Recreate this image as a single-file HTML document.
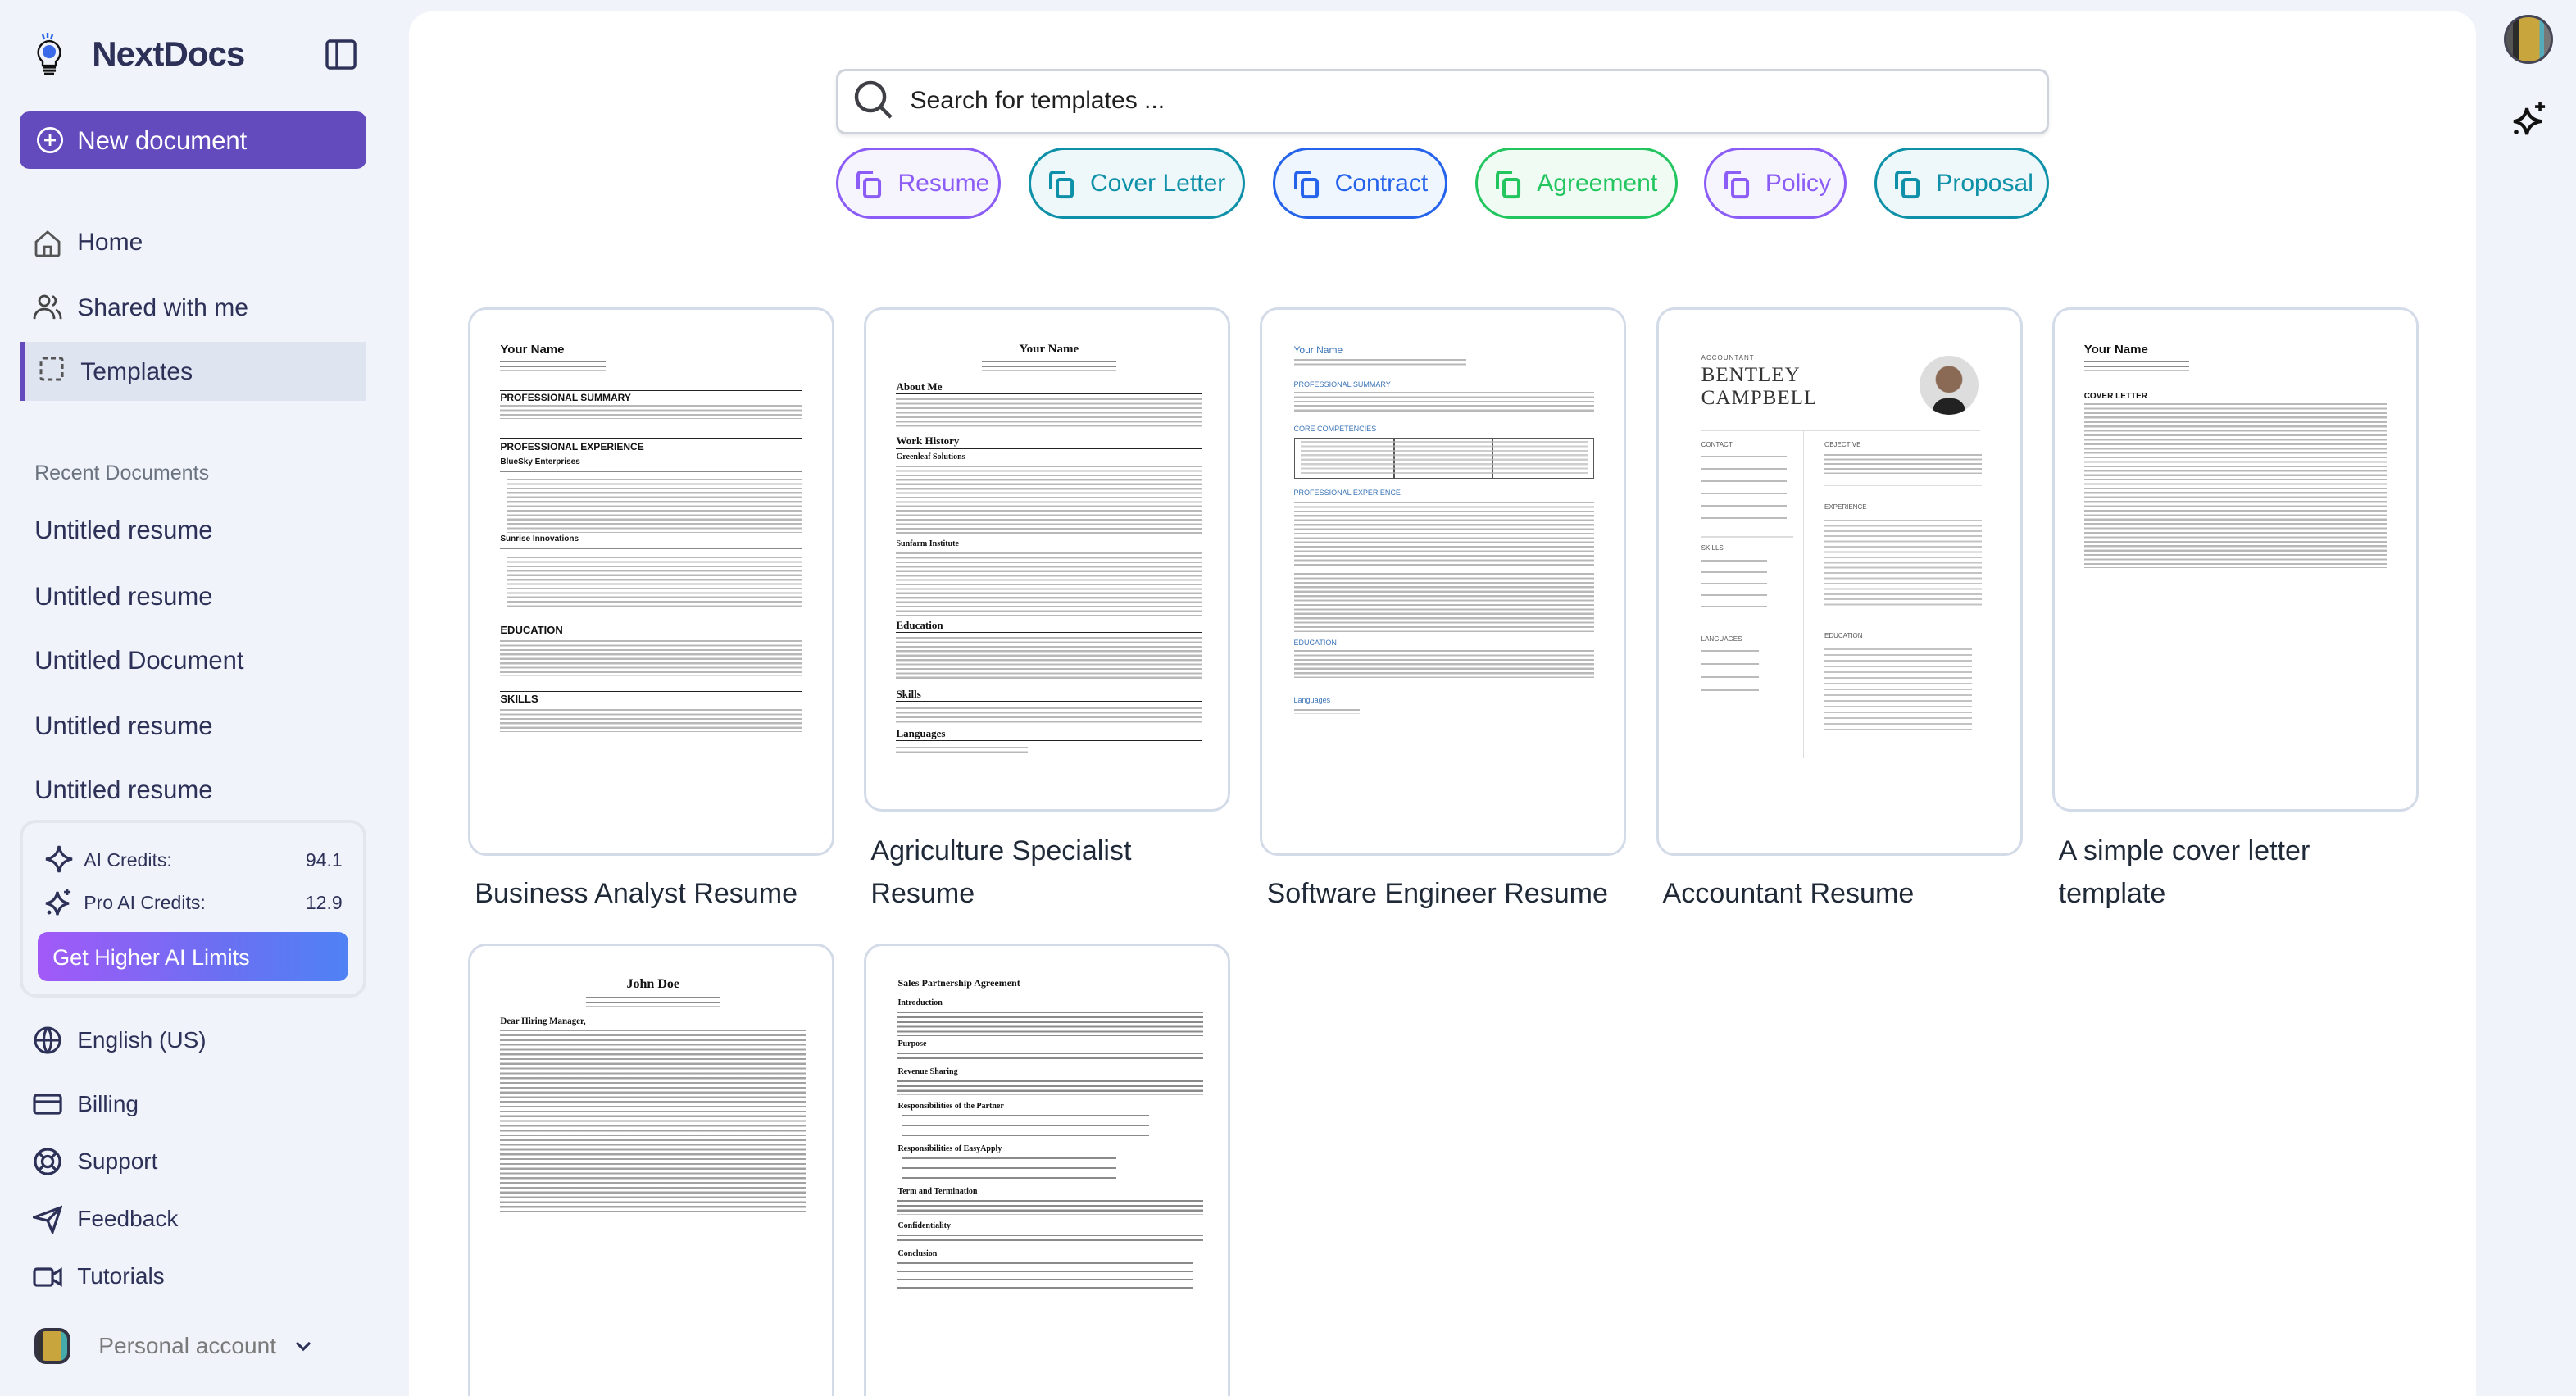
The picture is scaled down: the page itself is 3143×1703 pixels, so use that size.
<!DOCTYPE html>
<html><head><meta charset="utf-8">
<style>
*{box-sizing:border-box;margin:0;padding:0}
html,body{width:3143px;height:1703px;overflow:hidden;background:#f0f3f9}
#w{zoom:2.0045;width:1568px;height:850px;position:relative;font-family:"Liberation Sans",sans-serif;color:#2d3158;background:#f0f3f9}
.a{position:absolute}
.nav{position:absolute;left:47px;font-size:15px;color:#2d3158;white-space:nowrap;margin-top:1px}
.ic{position:absolute;left:20px}
.rec{position:absolute;left:21px;font-size:15.5px;color:#2d3158;margin-top:1px}
.main{position:absolute;left:249px;top:7px;width:1258px;height:860px;background:#fff;border-radius:14px}
.chip{position:absolute;top:90px;height:43px;border-radius:22px;border:1.5px solid;font-size:15px;display:flex;align-items:center;padding-left:36px;padding-top:1px}
.chip svg{position:absolute;left:10px;top:12px}
.card{position:absolute;width:223px;background:#fff;border:1.5px solid #d3dbe8;border-radius:11px;overflow:hidden}
.card .a{white-space:nowrap}
.p{position:absolute;background:repeating-linear-gradient(#b8b8b8 0 1.1px,transparent 1.1px 2.7px)}
.pd{position:absolute;background:repeating-linear-gradient(#8a8a8a 0 1.1px,transparent 1.1px 2.9px)}
.hr{position:absolute;height:0.7px;background:#222}
.h{position:absolute;font-weight:bold;color:#111;white-space:nowrap}
.tt{position:absolute;font-size:17px;color:#1f2937;line-height:26px;margin-top:1px}
</style></head><body><div id="w">

<svg class="a" style="left:20px;top:20px" width="20" height="27" viewBox="0 0 20 27">
<path d="M6 1l1 3M9 0v3M12 1l-1 3" stroke="#2563eb" stroke-width="1.2"/>
<path d="M10 5a7 7 0 0 0-4 12.5V20h8v-2.5A7 7 0 0 0 10 5z" fill="none" stroke="#111" stroke-width="1.2"/>
<circle cx="10" cy="11.5" r="4" fill="#3b6ae8"/>
<path d="M6 21h8M6 23h8M7 25h6" stroke="#111" stroke-width="1.5"/>
</svg>
<div class="a" style="left:56px;top:21px;font-size:21px;font-weight:bold;color:#2d3158;letter-spacing:-0.5px">NextDocs</div>
<svg class="a" style="left:198px;top:24px" width="20" height="19" viewBox="0 0 20 19"><rect x="1" y="1" width="17" height="16.5" rx="2" fill="none" stroke="#2d3158" stroke-width="1.7"/><path d="M7 1v16.5" stroke="#2d3158" stroke-width="1.7"/></svg>

<div class="a" style="left:12px;top:68px;width:211px;height:35px;background:#634bbd;border-radius:6px"></div>
<svg class="a" style="left:22px;top:77px" width="17" height="17" viewBox="0 0 17 17"><circle cx="8.5" cy="8.5" r="7.3" fill="none" stroke="#fff" stroke-width="1.4"/><path d="M8.5 5v7M5 8.5h7" stroke="#fff" stroke-width="1.4"/></svg>
<div class="nav" style="top:76px;color:#fff;font-size:15.5px">New document</div>

<svg class="ic" style="top:139px" width="18" height="18" viewBox="0 0 18 18" fill="none" stroke="#555" stroke-width="1.4"><path d="M2 8L9 2l7 6v7.5a1 1 0 0 1-1 1H3a1 1 0 0 1-1-1z"/><path d="M7 16.5V11h4v5.5"/></svg>
<div class="nav" style="top:138px">Home</div>
<svg class="ic" style="top:178px" width="18" height="18" viewBox="0 0 18 18" fill="none" stroke="#444" stroke-width="1.4"><circle cx="7" cy="5" r="3"/><path d="M1 16c0-4 3-6 6-6s6 2 6 6"/><path d="M12 2.2a3 3 0 0 1 0 5.6M14 10.5c2 .8 3 3 3 5.5"/></svg>
<div class="nav" style="top:178px">Shared with me</div>
<div class="a" style="left:12px;top:208px;width:211px;height:36px;background:#dfe4f1;border-left:3px solid #634bbd"></div>
<svg class="ic" style="top:217px;left:24px" width="16" height="16" viewBox="0 0 16 16" fill="none" stroke="#555" stroke-width="1.5" stroke-dasharray="3 2"><rect x="1" y="1" width="13" height="13" rx="1"/></svg>
<div class="nav" style="top:217px;left:49px">Templates</div>

<div class="a" style="left:21px;top:281px;font-size:12.5px;color:#6b7280">Recent Documents</div>
<div class="rec" style="top:313px">Untitled resume</div>
<div class="rec" style="top:353px">Untitled resume</div>
<div class="rec" style="top:392px">Untitled Document</div>
<div class="rec" style="top:432px">Untitled resume</div>
<div class="rec" style="top:471px">Untitled resume</div>

<div class="a" style="left:12px;top:499px;width:211px;height:108px;border:2px solid #e3e6ed;border-radius:10px"></div>
<svg class="a" style="left:27px;top:514px" width="18" height="18" viewBox="0 0 18 18"><path d="M9 1Q10 8 17 9Q10 10 9 17Q8 10 1 9Q8 8 9 1z" fill="none" stroke="#2d3158" stroke-width="1.6"/></svg>
<div class="a" style="left:51px;top:517px;font-size:11.5px;color:#2d3158">AI Credits:</div>
<div class="a" style="left:186px;top:517px;font-size:11.5px;color:#2d3158">94.1</div>
<svg class="a" style="left:27px;top:540px" width="18" height="18" viewBox="0 0 18 18"><path d="M8 3Q9 9 15 10Q9 11 8 17Q7 11 1 10Q7 9 8 3z" fill="none" stroke="#2d3158" stroke-width="1.6"/><path d="M14 1v4M12 3h4" stroke="#2d3158" stroke-width="1.3"/><circle cx="3" cy="15.5" r="1.2" fill="#2d3158"/></svg>
<div class="a" style="left:51px;top:543px;font-size:11.5px;color:#2d3158">Pro AI Credits:</div>
<div class="a" style="left:186px;top:543px;font-size:11.5px;color:#2d3158">12.9</div>
<div class="a" style="left:23px;top:567px;width:189px;height:30px;border-radius:6px;background:linear-gradient(90deg,#a259f7,#6a70f2 60%,#4f82f4)"></div>
<div class="a" style="left:32px;top:575px;font-size:13.5px;color:#fff">Get Higher AI Limits</div>

<svg class="ic" style="top:624px" width="18" height="18" viewBox="0 0 18 18" fill="none" stroke="#2d3158" stroke-width="1.5"><circle cx="9" cy="9" r="7.5"/><path d="M1.5 9h15M9 1.5c-3 3-3 12 0 15M9 1.5c3 3 3 12 0 15"/></svg>
<div class="nav" style="top:624px;font-size:14px">English (US)</div>
<svg class="ic" style="top:665px" width="18" height="14" viewBox="0 0 18 14" fill="none" stroke="#2d3158" stroke-width="1.6"><rect x="1" y="1.5" width="16" height="11" rx="1.5"/><path d="M1 5.5h16"/></svg>
<div class="nav" style="top:663px;font-size:14px">Billing</div>
<svg class="ic" style="top:698px" width="18" height="18" viewBox="0 0 18 18" fill="none" stroke="#2d3158" stroke-width="1.6"><circle cx="9" cy="9" r="7.5"/><circle cx="9" cy="9" r="3.3"/><path d="M4 4l2.6 2.6M14 4l-2.6 2.6M4 14l2.6-2.6M14 14l-2.6-2.6"/></svg>
<div class="nav" style="top:698px;font-size:14px">Support</div>
<svg class="ic" style="top:733px" width="18" height="18" viewBox="0 0 18 18" fill="none" stroke="#2d3158" stroke-width="1.6"><path d="M1 8L17 2l-5 15-3-7z M9 10l8-8"/></svg>
<div class="nav" style="top:733px;font-size:14px">Feedback</div>
<svg class="ic" style="top:771px" width="18" height="13" viewBox="0 0 18 13" fill="none" stroke="#2d3158" stroke-width="1.6"><rect x="1" y="1.5" width="11" height="10" rx="1.5"/><path d="M12 5l5-3v9l-5-3"/></svg>
<div class="nav" style="top:768px;font-size:14px">Tutorials</div>

<div class="a" style="left:21px;top:808px;width:22px;height:22px;border-radius:7px;background:linear-gradient(90deg,#333 0 20%,#c9a53e 20% 80%,#4aa 80%);border:2px solid #334"></div>
<div class="a" style="left:60px;top:811px;font-size:14px;color:#7a7a7a">Personal account</div>
<svg class="a" style="left:179px;top:815px" width="11" height="8" viewBox="0 0 11 8"><path d="M1.5 2l4 4 4-4" fill="none" stroke="#2d3158" stroke-width="1.6"/></svg>

<div class="a" style="left:1524px;top:9px;width:30px;height:30px;border-radius:50%;background:linear-gradient(90deg,#555 0 15%,#2b2b2b 15% 30%,#c9a53e 30% 75%,#5ab 75% 85%,#777 85%);border:1.5px solid #445"></div>
<svg class="a" style="left:1528px;top:61px" width="23" height="23" viewBox="0 0 23 23"><path d="M10 5Q11 12 19 13Q11 14 10 21Q9 14 2 13Q9 12 10 5z" fill="none" stroke="#111" stroke-width="2"/><path d="M18 1v6M15 4h6" stroke="#111" stroke-width="1.8"/><circle cx="3.5" cy="19.5" r="1.4" fill="#111"/></svg>

<div class="main"></div>
<div class="a" style="left:509px;top:42px;width:738px;height:40px;border:1.5px solid #cfd3dc;border-radius:6px;box-shadow:0 1px 2px rgba(0,0,0,.08)"></div>
<svg class="a" style="left:519px;top:48px" width="26" height="26" viewBox="0 0 26 26" fill="none" stroke="#3f3f46" stroke-width="2.2"><circle cx="11" cy="11" r="8.5"/><path d="M17.5 17.5l6 6"/></svg>
<div class="a" style="left:554px;top:53px;font-size:15px;color:#1f1f1f">Search for templates ...</div>

<div class="chip" style="left:509px;width:100px;border-color:#8b5cf6;color:#8b5cf6;background:#f6f4fd"><svg width="18" height="18" viewBox="0 0 18 18" fill="none" stroke="#8b5cf6" stroke-width="2"><path d="M2 12V3a1.5 1.5 0 0 1 1.5-1.5H11"/><rect x="6" y="6" width="9" height="10.5" rx="1.5"/></svg>Resume</div>
<div class="chip" style="left:626px;width:132px;border-color:#0e91a8;color:#0e91a8;background:#eef8fa"><svg width="18" height="18" viewBox="0 0 18 18" fill="none" stroke="#0e91a8" stroke-width="2"><path d="M2 12V3a1.5 1.5 0 0 1 1.5-1.5H11"/><rect x="6" y="6" width="9" height="10.5" rx="1.5"/></svg>Cover Letter</div>
<div class="chip" style="left:775px;width:106px;border-color:#2563eb;color:#2563eb;background:#f0f6fd"><svg width="18" height="18" viewBox="0 0 18 18" fill="none" stroke="#2563eb" stroke-width="2"><path d="M2 12V3a1.5 1.5 0 0 1 1.5-1.5H11"/><rect x="6" y="6" width="9" height="10.5" rx="1.5"/></svg>Contract</div>
<div class="chip" style="left:898px;width:123px;border-color:#22c55e;color:#22c55e;background:#effbf3"><svg width="18" height="18" viewBox="0 0 18 18" fill="none" stroke="#22c55e" stroke-width="2"><path d="M2 12V3a1.5 1.5 0 0 1 1.5-1.5H11"/><rect x="6" y="6" width="9" height="10.5" rx="1.5"/></svg>Agreement</div>
<div class="chip" style="left:1037px;width:87px;border-color:#8b5cf6;color:#8b5cf6;background:#f6f4fd"><svg width="18" height="18" viewBox="0 0 18 18" fill="none" stroke="#8b5cf6" stroke-width="2"><path d="M2 12V3a1.5 1.5 0 0 1 1.5-1.5H11"/><rect x="6" y="6" width="9" height="10.5" rx="1.5"/></svg>Policy</div>
<div class="chip" style="left:1141px;width:106px;border-color:#0e91a8;color:#0e91a8;background:#eef8fa"><svg width="18" height="18" viewBox="0 0 18 18" fill="none" stroke="#0e91a8" stroke-width="2"><path d="M2 12V3a1.5 1.5 0 0 1 1.5-1.5H11"/><rect x="6" y="6" width="9" height="10.5" rx="1.5"/></svg>Proposal</div>

<div class="card" style="left:285px;top:187px;height:334px">
<div class="h" style="left:18px;top:20px;font-size:7.5px">Your Name</div>
<div class="pd" style="left:18px;top:31px;width:64px;height:6px"></div>
<div class="hr" style="left:18px;top:49px;width:184px"></div>
<div class="h" style="left:18px;top:50px;font-size:6px">PROFESSIONAL SUMMARY</div>
<div class="p" style="left:18px;top:58px;width:184px;height:8.5px"></div>
<div class="hr" style="left:18px;top:78px;width:184px"></div>
<div class="h" style="left:18px;top:80px;font-size:6px">PROFESSIONAL EXPERIENCE</div>
<div class="h" style="left:18px;top:90px;font-size:5px">BlueSky Enterprises</div>
<div class="pd" style="left:18px;top:98px;width:184px;height:2px"></div>
<div class="p" style="left:22px;top:103px;width:180px;height:33px"></div>
<div class="h" style="left:18px;top:137px;font-size:5px">Sunrise Innovations</div>
<div class="pd" style="left:18px;top:145px;width:184px;height:2px"></div>
<div class="p" style="left:22px;top:150px;width:180px;height:32px"></div>
<div class="hr" style="left:18px;top:189px;width:184px"></div>
<div class="h" style="left:18px;top:191px;font-size:6.5px">EDUCATION</div>
<div class="p" style="left:18px;top:201px;width:184px;height:22px"></div>
<div class="hr" style="left:18px;top:232px;width:184px"></div>
<div class="h" style="left:18px;top:233px;font-size:6.5px">SKILLS</div>
<div class="p" style="left:18px;top:243px;width:184px;height:14px"></div>
</div>
<div class="tt" style="left:289px;top:530px">Business Analyst Resume</div>

<div class="card" style="left:526px;top:187px;height:307px">
<div class="h" style="left:0;width:222px;text-align:center;top:20px;font-size:7.5px;font-family:'Liberation Serif',serif">Your Name</div>
<div class="pd" style="left:70px;top:31px;width:82px;height:6px"></div>
<div class="h" style="left:18px;top:43px;font-size:6.5px;font-family:'Liberation Serif',serif">About Me</div>
<div class="hr" style="left:18px;top:51px;width:186px"></div>
<div class="p" style="left:18px;top:54px;width:186px;height:19px"></div>
<div class="h" style="left:18px;top:76px;font-size:6.5px;font-family:'Liberation Serif',serif">Work History</div>
<div class="hr" style="left:18px;top:84px;width:186px"></div>
<div class="h" style="left:18px;top:87px;font-size:5px;font-family:'Liberation Serif',serif">Greenleaf Solutions</div>
<div class="p" style="left:18px;top:95px;width:186px;height:43px"></div>
<div class="h" style="left:18px;top:140px;font-size:5px;font-family:'Liberation Serif',serif">Sunfarm Institute</div>
<div class="p" style="left:18px;top:148px;width:186px;height:38px"></div>
<div class="h" style="left:18px;top:188px;font-size:6.5px;font-family:'Liberation Serif',serif">Education</div>
<div class="hr" style="left:18px;top:196px;width:186px"></div>
<div class="p" style="left:18px;top:199px;width:186px;height:27px"></div>
<div class="h" style="left:18px;top:230px;font-size:6.5px;font-family:'Liberation Serif',serif">Skills</div>
<div class="hr" style="left:18px;top:238px;width:186px"></div>
<div class="p" style="left:18px;top:242px;width:186px;height:11px"></div>
<div class="h" style="left:18px;top:254px;font-size:6.5px;font-family:'Liberation Serif',serif">Languages</div>
<div class="hr" style="left:18px;top:262px;width:186px"></div>
<div class="p" style="left:18px;top:266px;width:80px;height:4px"></div>
</div>
<div class="tt" style="left:530px;top:504px">Agriculture Specialist<br>Resume</div>

<div class="card" style="left:767px;top:187px;height:334px">
<div class="h" style="left:19px;top:21px;font-size:6px;color:#3b74b8;font-weight:normal">Your Name</div>
<div class="p" style="left:19px;top:30px;width:105px;height:4px"></div>
<div class="h" style="left:19px;top:43px;font-size:4.5px;color:#3b74b8;font-weight:normal">PROFESSIONAL SUMMARY</div>
<div class="p" style="left:19px;top:50px;width:183px;height:13px"></div>
<div class="h" style="left:19px;top:70px;font-size:4.5px;color:#3b74b8;font-weight:normal">CORE COMPETENCIES</div>
<div class="a" style="left:19px;top:78px;width:183px;height:25px;border:0.7px solid #555;background:linear-gradient(90deg,transparent 33%,#555 33% 33.5%,transparent 33.5% 66%,#555 66% 66.5%,transparent 66.5%)"></div>
<div class="p" style="left:23px;top:80px;width:175px;height:21px;opacity:.7"></div>
<div class="h" style="left:19px;top:109px;font-size:4.5px;color:#3b74b8;font-weight:normal">PROFESSIONAL EXPERIENCE</div>
<div class="p" style="left:19px;top:117px;width:183px;height:40px"></div>
<div class="p" style="left:19px;top:160px;width:183px;height:36px"></div>
<div class="h" style="left:19px;top:200px;font-size:4.5px;color:#3b74b8;font-weight:normal">EDUCATION</div>
<div class="p" style="left:19px;top:207px;width:183px;height:17px"></div>
<div class="h" style="left:19px;top:235px;font-size:4.5px;color:#3b74b8;font-weight:normal">Languages</div>
<div class="p" style="left:19px;top:243px;width:40px;height:3px"></div>
</div>
<div class="tt" style="left:771px;top:530px">Software Engineer Resume</div>

<div class="card" style="left:1008px;top:187px;height:334px">
<div class="a" style="left:26px;top:27px;font-size:4px;color:#555;letter-spacing:.5px">ACCOUNTANT</div>
<div class="a" style="left:26px;top:33px;font-size:12.5px;color:#333;font-family:'Liberation Serif',serif;letter-spacing:.5px;line-height:14px">BENTLEY<br>CAMPBELL</div>
<div class="a" style="left:159px;top:28px;width:36px;height:36px;border-radius:50%;background:radial-gradient(circle at 50% 40%,#8a6a55 0 28%,#ddd 30%);overflow:hidden"><div class="a" style="left:8px;top:26px;width:20px;height:12px;background:#222;border-radius:8px 8px 0 0"></div></div>
<div class="a" style="left:26px;top:73px;width:170px;height:0.7px;background:#ddd"></div>
<div class="a" style="left:88px;top:73px;width:0.7px;height:200px;background:#ddd"></div>
<div class="a" style="left:26px;top:80px;font-size:4px;color:#555">CONTACT</div>
<div class="p" style="left:26px;top:89px;width:52px;height:42px;background:repeating-linear-gradient(#bbb 0 1px,transparent 1px 7.5px)"></div>
<div class="a" style="left:26px;top:138px;width:56px;height:0.6px;background:#ddd"></div>
<div class="a" style="left:26px;top:143px;font-size:4px;color:#555">SKILLS</div>
<div class="p" style="left:26px;top:152px;width:40px;height:32px;background:repeating-linear-gradient(#bbb 0 1px,transparent 1px 7px)"></div>
<div class="a" style="left:26px;top:198px;font-size:4px;color:#555">LANGUAGES</div>
<div class="p" style="left:26px;top:207px;width:35px;height:30px;background:repeating-linear-gradient(#bbb 0 1px,transparent 1px 8px)"></div>
<div class="a" style="left:101px;top:80px;font-size:4px;color:#555">OBJECTIVE</div>
<div class="p" style="left:101px;top:88px;width:96px;height:12px;background:repeating-linear-gradient(#bbb 0 1px,transparent 1px 2.8px)"></div>
<div class="a" style="left:101px;top:107px;width:96px;height:0.6px;background:#ddd"></div>
<div class="a" style="left:101px;top:118px;font-size:4px;color:#555">EXPERIENCE</div>
<div class="p" style="left:101px;top:128px;width:96px;height:52px;background:repeating-linear-gradient(#c3c3c3 0 1px,transparent 1px 3.2px)"></div>
<div class="a" style="left:101px;top:196px;font-size:4px;color:#555">EDUCATION</div>
<div class="p" style="left:101px;top:206px;width:90px;height:50px;background:repeating-linear-gradient(#c3c3c3 0 1px,transparent 1px 3.5px)"></div>
</div>
<div class="tt" style="left:1012px;top:530px">Accountant Resume</div>

<div class="card" style="left:1249px;top:187px;height:307px">
<div class="h" style="left:18px;top:20px;font-size:7.5px">Your Name</div>
<div class="pd" style="left:18px;top:31px;width:64px;height:6px"></div>
<div class="h" style="left:18px;top:50px;font-size:5px">COVER LETTER</div>
<div class="p" style="left:18px;top:57px;width:184px;height:100px"></div>
</div>
<div class="tt" style="left:1253px;top:504px">A simple cover letter<br>template</div>

<div class="card" style="left:285px;top:574px;height:300px">
<div class="h" style="left:0;width:222px;text-align:center;top:19px;font-size:8px;font-family:'Liberation Serif',serif">John Doe</div>
<div class="pd" style="left:70px;top:31px;width:82px;height:6px"></div>
<div class="h" style="left:18px;top:43px;font-size:5.5px;font-family:'Liberation Serif',serif">Dear Hiring Manager,</div>
<div class="pd" style="left:18px;top:51px;width:186px;height:112px;opacity:.8"></div>
</div>

<div class="card" style="left:526px;top:574px;height:300px">
<div class="h" style="left:19px;top:19px;font-size:6px;font-family:'Liberation Serif',serif">Sales Partnership Agreement</div>
<div class="h" style="left:19px;top:32px;font-size:5px;font-family:'Liberation Serif',serif">Introduction</div>
<div class="pd" style="left:19px;top:40px;width:186px;height:15px"></div>
<div class="h" style="left:19px;top:57px;font-size:5px;font-family:'Liberation Serif',serif">Purpose</div>
<div class="pd" style="left:19px;top:65px;width:186px;height:6px"></div>
<div class="h" style="left:19px;top:74px;font-size:5px;font-family:'Liberation Serif',serif">Revenue Sharing</div>
<div class="pd" style="left:19px;top:82px;width:186px;height:9px"></div>
<div class="h" style="left:19px;top:95px;font-size:5px;font-family:'Liberation Serif',serif">Responsibilities of the Partner</div>
<div class="pd" style="left:22px;top:103px;width:150px;height:16px;background:repeating-linear-gradient(#8a8a8a 0 1px,transparent 1px 6px)"></div>
<div class="h" style="left:19px;top:121px;font-size:5px;font-family:'Liberation Serif',serif">Responsibilities of EasyApply</div>
<div class="pd" style="left:22px;top:129px;width:130px;height:16px;background:repeating-linear-gradient(#8a8a8a 0 1px,transparent 1px 6px)"></div>
<div class="h" style="left:19px;top:147px;font-size:5px;font-family:'Liberation Serif',serif">Term and Termination</div>
<div class="pd" style="left:19px;top:155px;width:186px;height:9px"></div>
<div class="h" style="left:19px;top:168px;font-size:5px;font-family:'Liberation Serif',serif">Confidentiality</div>
<div class="pd" style="left:19px;top:176px;width:186px;height:6px"></div>
<div class="h" style="left:19px;top:185px;font-size:5px;font-family:'Liberation Serif',serif">Conclusion</div>
<div class="pd" style="left:19px;top:193px;width:180px;height:18px;background:repeating-linear-gradient(#8a8a8a 0 1px,transparent 1px 5px)"></div>
</div>

</div></body></html>
